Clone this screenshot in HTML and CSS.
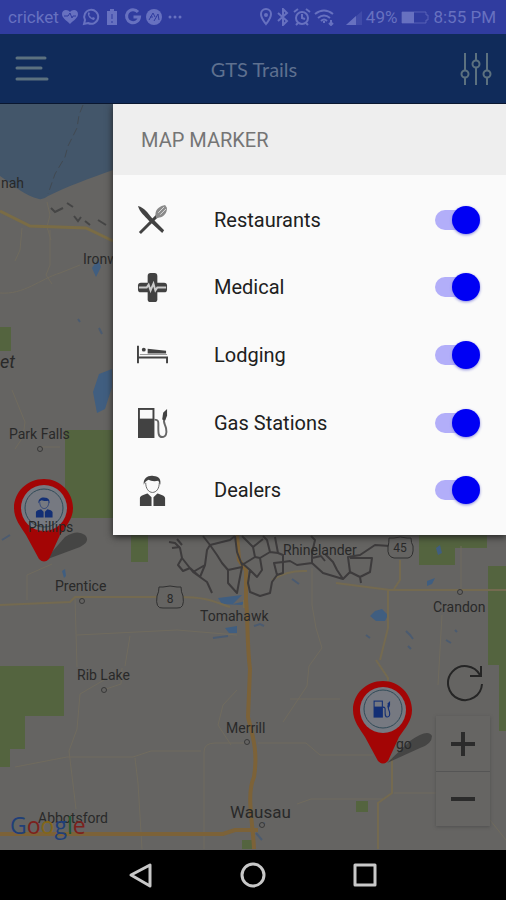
FILE: index.html
```html
<!DOCTYPE html>
<html lang="en">
<head>
<meta charset="utf-8">
<meta name="viewport" content="width=device-width, initial-scale=1">
<title>GTS Trails</title>
<link rel="stylesheet" href="styles.css">
</head>
<body>
<div class="screen">
  <div class="status">
    <span>cricket</span>
    <div class="status-icons">
      <svg width="18" height="18" viewBox="0 0 18 18"><path d="M9 16C5 12 1 10 1 6c0-5 6-5 8-2 2-3 8-3 8 2 0 4-4 6-8 10z" fill="currentColor"/><path d="M3 8h4l2-3 2 5 1-2h3" class="cut"/></svg>
      <svg width="18" height="18" viewBox="0 0 18 18" class="line"><path d="M2 16l1-4a7 7 0 1 1 3 3z"/><path d="M6 5c-1 3 3 7 6 7l1-2-2-1-1 1-3-3 1-1-1-2z" fill="currentColor" stroke="none"/></svg>
      <svg width="18" height="18" viewBox="0 0 18 18"><path d="M7 1h4v2h3v14H4V3h3z" fill="currentColor"/><path d="M9 6v5m0 2v2" class="cut"/></svg>
      <svg width="18" height="18" viewBox="0 0 18 18" class="line heavy"><path d="M14 4a6.500 6.500 0 1 0 1.500 5H9.500"/></svg>
      <svg width="18" height="18" viewBox="0 0 18 18"><circle cx="9" cy="9" r="8" fill="currentColor"/><path d="M4 12l4-7 2 4M9 13l4-7 1 6M5 9h3" class="cut"/></svg>
      <svg width="18" height="18" viewBox="0 0 18 18" fill="currentColor"><circle cx="4" cy="9" r="1.500"/><circle cx="9" cy="9" r="1.500"/><circle cx="14" cy="9" r="1.500"/></svg>
    </div>
    <div class="status-right">
      <svg width="14" height="18" viewBox="0 0 14 18" class="line"><path d="M7 16C4 12 2 10 2 6a5 5 0 0 1 10 0c0 4-2 6-5 10z"/><circle cx="7" cy="7" r="1"/></svg>
      <svg width="14" height="18" viewBox="0 0 14 18" class="line"><path d="M2 5l9 8-4 4V1l4 4-9 8"/></svg>
      <svg width="18" height="18" viewBox="0 0 18 18" class="line"><circle cx="9" cy="10" r="6"/><path d="M9 6v4l3 1M1 4l4-3m8 0l4 3M5 15l-2 2m10-2l2 2"/></svg>
      <svg width="20" height="18" viewBox="0 0 20 18" class="line"><path d="M1 6q9-7 18 0M4 10q6-5 12 0M7 13q3-3 6 0"/><path d="M10 13v2m7-3v5m-2-2l2 2 2-2"/></svg>
      <svg width="18" height="18" viewBox="0 0 18 18" class="signal"><path d="M1 17L17 3v14z" fill="currentColor" opacity=".3"/><path d="M1 17l10-9v9z" fill="currentColor"/></svg>
      <span>49%</span>
      <svg width="30" height="18" viewBox="0 0 30 18"><path d="M2 4h24v3h2v5h-2v3H2z" fill="none" stroke="currentColor" opacity=".7"/><path d="M2 4h12v11H2z" fill="currentColor"/></svg>
      <span>8:55 PM</span>
    </div>
  </div>

  <header class="bar">
    <button class="icon-button" aria-label="Menu"><svg width="34" height="26" viewBox="0 0 34 26" class="line menu"><path d="M2 2h28M2 12h24M2 23h30"/></svg></button>
    <h1>GTS Trails</h1>
    <button class="icon-button" aria-label="Filters"><svg width="32" height="34" viewBox="0 0 32 34" class="line filter"><path d="M5 1v17m0 7v8M16 1v7m0 7v18M27 1v17m0 7v8"/><circle cx="5" cy="22" r="3.500"/><circle cx="16" cy="12" r="3.500"/><circle cx="27" cy="22" r="3.500"/></svg></button>
  </header>

  <main class="map">
    <svg class="map-art" viewBox="0 104 506 746" preserveAspectRatio="xMidYMid slice">
      <defs>
        <g id="pump">
          <path d="M1 1h17v31H1z"/>
          <path d="M3 3h13v9H3z" class="pump-window"/>
          <path d="M18 13c5 0 4 3 4 8 0 6 0 10 4 10s5-4 4-9-4-6-1-12" class="pump-hose"/>
          <path d="M26 13l1-7 4-4v7l-2 5z"/>
        </g>
        <g id="person">
          <path d="M3 32V24c0-3 5-4 8-5l4 4v9zM29 32V24c0-3-5-4-8-5l-4 4v9z"/>
          <path d="M9 8c0 6 3 10 7 10s7-4 7-10" class="person-face"/>
          <path d="M7 10C6 3 12 0 17 1c6 0 8 4 7 9l-2-4c-5 1-8 0-10-1-2 1-4 2-5 5z"/>
        </g>
      </defs>
      <path d="M0 104h113v66c-25 9-45 16-65 26q-5 4-9 3C25 196 15 186 0 176z" class="water"/>
      <g class="park">
        <path d="M65 430h48v30h39v58H65z"/><path d="M131 530h17v32h-17zM0 327h11v24H0zM0 666h64v50H25v33H10v18H0z"/>
        <path d="M419 530h68v18h-32v17h-36zM488 566h18v165h-7v-66h-11zM356 801h12v11h-12zM242 840h11v9h-11z"/>
      </g>
      <g class="lake">
        <path d="M93 392l6-18 13-5v18l-7 22-8 4zM92 268l6-9 3 8-5 10zM370 616l5-5 7-2 6 6-3 6h-9zM427 581l8-3-3 6-5 2zM436 548l4-3 2 8-4 2zM218 598l24-3-9 9 13-3-4 4-20-1zM225 628l12-2v7h-8zM62 571l3-2 1 7-2 2z"/>
        <path d="M406 631l4 4 3 4m-5 7l3 3m35-9l5 3m4-13l2 2M366 635l4 3M2 540l8-5M292 579l7 5m-45 42l6-2 4 2M256 833l6 7m3-17l-6 3M213 638l15-2M99 328l3 6m-24-15l2 3" class="lake-line"/>
      </g>
      <g class="minor">
        <path d="M47 202l3 13-3 12 4 13M50 230v35l-4 10 6 9M22 228l-2 22-5 11M12 390l13 32-2 15-8 12M40 447h20"/>
        <path d="M0 293c24 2 40-14 60-20l20-8M27 600v-25l25-11M75 597l2 70M77 635l100-5 60 5M130 636l-5 30M104 680l-24 14-3 35-8 22 7 58M122 668l-1 16-18 6"/>
        <path d="M15 767l52-10h66l18-6h50M135 758l3 25 4 66M204 849v-97q0-9 11-9h29M237 690l-14 15-5 20 13 20M258 743h48l14 12h53M312 568v37l4 23 6 20-13 18-2 20-24 36M290 699h50M442 615l-4 70M297 804l14-5h72M394 793h48l26 9M461 546v50M490 820l16 20"/>
      </g>
      <g class="road">
        <path d="M0 605l70-3 5-5h105c28 0 34 5 50 10M244 600v8M272 580q15-10 35-9M336 583l54 7h116M400 560v20l-6 9M388 590v38l-8 32M376 660l12 18-2 80M392 758v35l-14 10v46" class="pale"/>
        <path d="M0 211l30 15 56 2 27 13"/>
        <path d="M237 535l2 25 7 10v30c2 20 1 47 4 69l-2 48c5 20 10 35 6 60-8 18-1 45 0 72" class="highway"/>
        <path d="M0 834h223l12-4h23" class="highway"/>
      </g>
      <path d="M83 105l-4 10-2 13-9 18-3 11-10 17-7 20" class="border"/>
      <path d="M51 208l4 4 8-4m4-5l6 4m1 9l4 5 3-4m4 4l5 4m8-5l8 5" class="border strong"/>
      <g class="trail">
        <path d="M169 542l6 1 5 5 2 10-4 7 5 6 7-3 10 9 7 5 5 11M172 548l8-1M177 539l5 6M182 558l11 14 12-7 2-15 3-5-7-9M193 572l7 5 5-12"/>
        <path d="M210 545l7 10 5 8 6 7v13l9 10 2-11 3-15-14 3M210 545l20-5 5-4M235 536l2 16 5 13 13-8-2-10-11-11"/>
        <path d="M242 563l8 7-2 13 2 9 10 4 10-3 2-11 5-7-3-12 9-1v11l-6 2M255 557l5 1 2 12-5 7-7-7M260 558l10-6-3-12-4-4M270 552l8 1-3-16M253 547l10-8"/>
        <path d="M283 562l7-1 7 4 15-2v-10l3-13-4-4M278 553l5 2v7M312 563l11 10 20 6 7-7-2-15 12-2 15-10 15 1M350 558l22 0-2 14-10 5 1 6M350 572l10 5M325 554l8 8 4 8 6 9M312 558l9-2 4 5"/>
      </g>
      <g class="town-ring"><circle cx="40" cy="449" r="2.500"/><circle cx="82" cy="601" r="2.500"/><circle cx="104" cy="690" r="2.500"/><circle cx="247" cy="742" r="2.500"/><circle cx="460" cy="592" r="2.500"/><circle cx="262" cy="825" r="2.500"/></g>
      <g class="route"><path d="M159 587h4q7-2 14 0h4q0 5 2 9 2 13-6 12H163q-8 1-6-12 2-4 2-9zM389 538h5q6-2 13 0h4q0 5 2 8 1 11-5 12H394q-7-1-6-11 1-4 1-9z"/><text x="170" y="603">8</text><text x="400" y="552">45</text></g>
      <path d="M45 560l20-23q12-8 20-2 6 6-5 12zM387 763l23-22q18-13 22-5 0 8-12 12z" class="pin-shadow"/>
      <g class="pin">
        <path d="M44 479c-17 0-30 13-30 29 0 11 7 19 12 27l13 24q5 5 10 0l11-24c6-9 13-16 13-27 0-16-13-29-29-29z"/>
        <circle cx="44" cy="508" r="23" class="pin-face"/><circle cx="44" cy="508" r="19" class="pin-line"/>
        <g class="pin-icon" transform="translate(34 497) scale(.64)"><use href="#person"/></g>
      </g>
      <g class="place">
        <text x="1" y="188">nah</text><text x="83" y="264">Ironwood</text><text x="0" y="368" class="forest">et</text>
        <text x="9" y="439">Park Falls</text><text x="28" y="532">Phillips</text><text x="55" y="591">Prentice</text>
        <text x="283" y="555">Rhinelander</text><text x="200" y="621">Tomahawk</text><text x="433" y="612">Crandon</text>
        <text x="77" y="680">Rib Lake</text><text x="226" y="733">Merrill</text><text x="396" y="749">go</text>
        <text x="38" y="823">Abbotsford</text><text x="230" y="818" class="city">Wausau</text>
      </g>
      <g class="pin">
        <path d="M383 681c-17 0-30 13-30 29 0 11 7 19 12 27l13 24q5 5 10 0l11-24c6-9 13-16 13-27 0-16-13-29-29-29z"/>
        <circle cx="383" cy="710" r="23" class="pin-face"/><circle cx="383" cy="709" r="19" class="pin-line"/>
        <g class="pin-icon" transform="translate(373 700) scale(.55)"><use href="#pump"/></g>
      </g>
      <text x="10" y="834" class="google"><tspan class="g-blue">G</tspan><tspan class="g-red">o</tspan><tspan class="g-yellow">o</tspan><tspan class="g-blue">g</tspan><tspan class="g-green">l</tspan><tspan class="g-red">e</tspan></text>
    </svg>
    <div class="controls">
      <button class="refresh" aria-label="Refresh"><svg width="40" height="40" viewBox="0 0 40 40" class="line"><path d="M35 12A17 17 0 1 0 37 21M36 3v10H25"/></svg></button>
      <div class="zoom">
        <button aria-label="Zoom in"><svg width="24" height="24" viewBox="0 0 24 24"><path d="M0 12h24M12 0v24"/></svg></button>
        <button aria-label="Zoom out"><svg width="24" height="24" viewBox="0 0 24 24"><path d="M0 12h24"/></svg></button>
      </div>
    </div>

    <section class="panel">
      <h2>MAP MARKER</h2>
      <div class="options">
        <label><svg class="glyph" viewBox="0 0 32 32"><path d="M3 30L21 12" class="tool"/><path d="M1 2c7 2 10 7 14 12l13 13-2 3L12 17C8 12 3 9 1 2z"/><path d="M19 11c0-6 5-9 10-10l2 3c0 5-3 9-8 10l-3 1z" class="fork-head"/><path d="M22 9l6-6m-4 8l6-6" class="fork-gap"/></svg><span>Restaurants</span><input type="checkbox" checked></label>
        <label><svg class="glyph" viewBox="0 0 32 32"><rect x="11" y="1" width="10" height="30" rx="3"/><rect x="1" y="11" width="30" height="10" rx="3"/><path d="M2 16h8l2-3 2 6 3-7 2 7 2-3h9" class="pulse"/></svg><span>Medical</span><input type="checkbox" checked></label>
        <label><svg class="glyph" viewBox="0 0 32 32"><path d="M1 7v18M1 19h30v6" class="bed-line"/><path d="M3 16h28" class="bed-sheet"/><circle cx="7" cy="11" r="2"/><path d="M11 10l19 2v3H11z"/></svg><span>Lodging</span><input type="checkbox" checked></label>
        <label><svg class="glyph" viewBox="0 0 32 32"><use href="#pump"/></svg><span>Gas Stations</span><input type="checkbox" checked></label>
        <label><svg class="glyph" viewBox="0 0 32 32"><use href="#person"/></svg><span>Dealers</span><input type="checkbox" checked></label>
      </div>
    </section>
  </main>

  <nav class="system">
    <button aria-label="Back"><svg width="26" height="26" viewBox="0 0 26 26"><path d="M3 13L22 3v21z"/></svg></button>
    <button aria-label="Home"><svg width="26" height="26" viewBox="0 0 26 26"><circle cx="13" cy="13" r="11"/></svg></button>
    <button aria-label="Recent apps"><svg width="26" height="26" viewBox="0 0 26 26"><path d="M3 3h20v20H3z"/></svg></button>
  </nav>
</div>
</body>
</html>
```

FILE: styles.css
```css
* { box-sizing: border-box; }
body { margin: 0; background: #000; font-family: Roboto, "Liberation Sans", sans-serif; }
button { border: 0; padding: 0; background: none; color: inherit; display: grid; place-items: center; }
svg { display: block; flex: none; }
.screen { min-height: 100vh; display: flex; flex-direction: column; }
.line { fill: none; stroke: currentColor; stroke-width: 2; }
.heavy { stroke-width: 3; }

.status { height: 34px; padding: 0 10px 0 8px; background: #303c9f; color: #6771c0; display: flex; align-items: center; font-size: 17px; line-height: 34px; white-space: nowrap; }
.status-icons { display: flex; gap: 3px; margin-left: 2px; }
.status-right { display: flex; align-items: center; gap: 3px; margin-left: auto; }
.signal { margin-left: 8px; }
.cut { fill: none; stroke: #303c9f; stroke-width: 1; }

.bar { height: 70px; padding: 0 12px 0 14px; background: #102b5a; color: #5c717f; display: flex; align-items: center; justify-content: space-between; border-bottom: 1px solid #0a1730; }
.bar h1 { margin: 0; font: 400 20px/28px Lato, sans-serif; color: #5e708f; }
.icon-button { width: 36px; height: 44px; }
.menu { stroke-width: 3; stroke-linecap: round; }

.map { position: relative; flex: 1; min-height: 480px; background: #656462; overflow: hidden; }
.map-art { position: absolute; inset: 0; width: 100%; height: 100%; }
.water { fill: #43566a; }
.park { fill: #54643f; }
.lake { fill: #405e80; }
.lake-line { fill: none; stroke: #4b5b70; stroke-width: 2; }
.minor { fill: none; stroke: #706b5e; stroke-width: 1; }
.road { fill: none; stroke: #7a6c45; stroke-width: 3; }
.pale { stroke: #746a50; stroke-width: 2; }
.highway { stroke: #7c6238; stroke-width: 4; }
.border { fill: none; stroke: #414951; stroke-width: 1; stroke-dasharray: 8 4; }
.strong { stroke: #454545; stroke-width: 2; stroke-dasharray: none; }
.trail { fill: none; stroke: #3d3b3c; stroke-width: 2; stroke-linejoin: round; }
.town-ring { fill: #656462; stroke: #383838; stroke-width: 1; }
.route { fill: #656462; stroke: #303030; stroke-width: 1; }
.route text { fill: #292929; stroke: none; font-size: 12px; text-anchor: middle; }
.place { fill: #292929; font-size: 14px; }
.forest { font-size: 18px; font-style: italic; }
.city { font-size: 17px; }
.pin { fill: #a30505; }
.pin-face { fill: #767981; }
.pin-line { fill: none; stroke: #304a57; stroke-width: 1; }
.pin-icon { fill: #132f75; --window: #767981; --hose: #132f75; }
.pin-shadow { fill: #383838; opacity: .7; }
.pump-window { fill: var(--window); }
.pump-hose { fill: none; stroke: var(--hose); stroke-width: 2; }
.person-face { fill: var(--window); stroke: var(--hose); stroke-width: 1; }
.google { font: 500 23px "Open Sans", sans-serif; }
.g-blue { fill: #203f78; }
.g-red { fill: #7c211d; }
.g-yellow { fill: #836718; }
.g-green { fill: #1d5930; }

.controls { position: absolute; right: 16px; bottom: 24px; width: 54px; display: flex; flex-direction: column; align-items: center; gap: 13px; color: #252525; }
.refresh svg { margin-left: 4px; }
.zoom { width: 100%; background: #666563; box-shadow: 0 1px 3px #505050; }
.zoom button { width: 100%; height: 55px; }
.zoom button + button { border-top: 1px solid #555; }
.zoom svg { stroke: #2b2b2b; stroke-width: 4; }

.panel { position: absolute; top: 0; right: 0; left: 113px; background: #fafafa; box-shadow: 0 2px 7px #222; }
.panel h2 { margin: 0; height: 71px; padding-left: 28px; background: #eee; color: #757575; font-size: 20px; line-height: 72px; font-weight: 400; }
.options { min-height: 360px; padding: 11px 0; display: grid; grid-template-rows: repeat(5, 1fr); }
.options label { display: flex; align-items: center; padding: 0 26px 0 24px; color: #202020; font-size: 20px; line-height: 28px; }
.options span { margin-left: 46px; }
.glyph { width: 31px; height: 31px; fill: #424242; --window: #fafafa; --hose: #666; }
.tool { stroke: #424242; stroke-width: 3; }
.fork-head { fill: #8a8a8a; }
.fork-gap { stroke: #ddd; stroke-width: 1; }
.pulse { fill: none; stroke: #ccc; stroke-width: 2; }
.bed-line { fill: none; stroke: #424242; stroke-width: 2; }
.bed-sheet { stroke: #999; stroke-width: 1; }
input { appearance: none; position: relative; flex: none; width: 45px; height: 28px; margin: 0 0 0 auto; }
input::before { content: ""; position: absolute; inset: 4px 5px 4px 0; border-radius: 10px; background: #c4c4c4; }
input::after { content: ""; position: absolute; top: 0; left: 0; width: 28px; height: 28px; border-radius: 50%; background: #fff; box-shadow: 0 1px 3px #8888dd; }
input:checked::before { background: #b2aef9; }
input:checked::after { left: auto; right: 0; background: #0000f4; }

.system { height: 50px; background: #000; color: #c8c8c8; display: flex; align-items: center; justify-content: center; gap: 86px; }
.system svg { fill: none; stroke: currentColor; stroke-width: 3; stroke-linejoin: round; }
```
